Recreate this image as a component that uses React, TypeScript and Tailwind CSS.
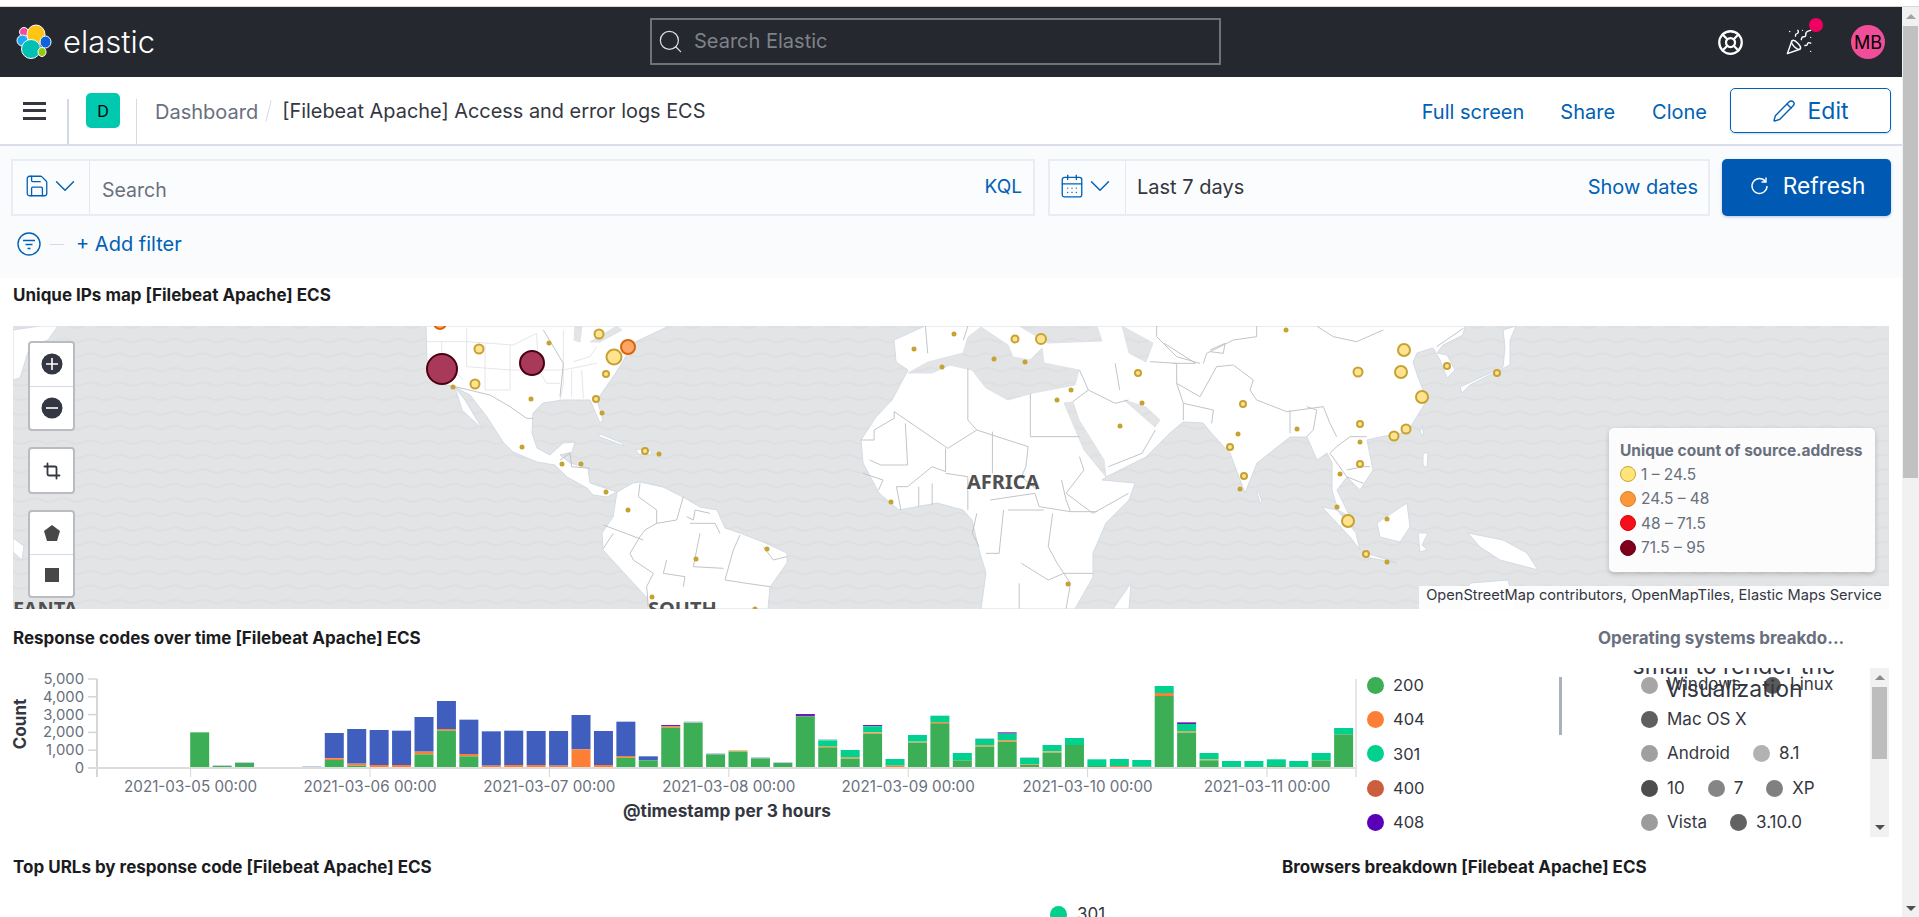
import { CalendarDays, ChevronDown, Crop, LifeBuoy, PartyPopper, Pencil, Save, Search } from 'lucide-react';

// polyline helper: zoom crops were read in crop pixels, so convert them to page pixels here
const at = (ox: number, k: number, pts: number[]) => {
  const out: string[] = [];
  for (let i = 0; i < pts.length; i += 2) out.push(`${ox + pts[i] / k},${320 + pts[i + 1] / 3}`);
  return out.join(' ');
};

const LAND = [
  // north + central america
  '426,326 427,360 440,383 455,387 470,395 487,417 503,442 513,452 537,462 555,465 567,477 587,488 593,495 607,497 617,492 590,483 588,468 570,463 560,455 572,452 575,442 563,443 550,455 537,448 532,433 533,413 543,403 563,400 590,400 600,423 603,420 597,400 613,377 622,363 633,343 667,327 667,326',
  // baja
  '455,387 465,400 483,430 478,425 462,410',
  // caribbean
  '598,433 622,443 624,446 600,437',
  '636,449 652,451 650,455 638,454',
  // south america
  '617,492 633,483 640,482 663,487 683,497 700,507 717,510 725,528 740,533 763,542 787,553 787,563 770,587 768,609 648,609 647,598 603,550 602,533 613,517',
  // eurasia + africa
  '894,340 925,326 1465,326 1463,335 1443,345 1437,353 1447,355 1455,370 1447,378 1440,360 1433,348 1417,353 1413,362 1418,377 1427,400 1413,423 1407,432 1380,437 1367,440 1373,470 1360,490 1347,477 1337,490 1350,517 1338,510 1332,490 1332,463 1327,453 1317,460 1307,437 1290,437 1257,463 1245,493 1230,453 1213,435 1203,423 1183,422 1170,433 1146,457 1106,477 1102,480 1135,483 1129,500 1106,523 1093,553 1093,577 1075,609 981,609 986,573 979,550 972,520 963,510 937,503 899,510 879,493 863,463 861,440 876,417 892,400 908,370 896,362',
  // japan, sri lanka, taiwan, philippines
  '1460,387 1503,367 1505,347 1503,330 1516,326 1510,340 1510,365 1470,385 1462,393',
  '1257,492 1260,503 1262,502 1259,492',
  '1422,425 1424,436 1420,432',
  '1423,453 1428,453 1427,468 1423,465',
  // indonesia, new guinea, australia, madagascar
  '1322,507 1350,537 1360,550 1356,533 1337,510',
  '1377,523 1407,503 1410,527 1400,542 1380,537',
  '1363,552 1397,563 1365,557',
  '1418,533 1428,533 1422,545 1427,550 1420,552',
  '1468,533 1503,540 1527,553 1538,570 1500,560 1480,547',
  '1460,609 1470,583 1508,580 1516,609',
  '1113,609 1131,583 1129,609',
  // far east wrap at the left edge, new zealand piece
  '13,330 40,326 58,326 48,340 30,346 20,378 13,380',
  '13,538 24,546 22,560 13,552',
];

const WATER = [
  '908,373 928,362 963,353 968,337 981,327 1008,345 1013,357 1030,360 1042,348 1044,363 1079,370 1075,385 1033,393 1008,400 986,388 972,370 950,365 932,373',
  '1019,326 1048,343 1102,341 1097,326',
  '1122,326 1153,343 1146,362 1129,353',
  '1064,403 1084,450 1106,477 1104,460 1079,420 1073,402',
  '1124,400 1155,427 1160,420 1146,407',
  '575,326 582,326 580,342 574,340',
  '590,342 617,326 622,330 600,342',
];

const BORDERS = [
  at(400, 3, [165, 200, 270, 225, 330, 260, 380, 295, 400, 295]),
  at(400, 3, [430, 30, 490, 130, 480, 230]),
  at(400, 3, [480, 420, 510, 400, 515, 440, 570, 445]),
  at(400, 3, [720, 490, 715, 530, 770, 570, 770, 610, 830, 600, 850, 530]),
  at(400, 3, [770, 610, 735, 630, 720, 650, 690, 700, 700, 720, 760, 760, 740, 800, 745, 860]),
  at(400, 3, [610, 615, 730, 660]),
  at(400, 3, [610, 685, 640, 640]),
  at(400, 3, [860, 590, 880, 600, 885, 570, 930, 580]),
  at(400, 3, [870, 610, 945, 610, 960, 640]),
  at(400, 3, [1020, 645, 1000, 690, 975, 780, 1040, 790, 1110, 800]),
  at(400, 3, [800, 720, 790, 760, 855, 770, 850, 800]),
  at(400, 3, [900, 640, 890, 690, 880, 740, 970, 745]),
  at(400, 3, [1090, 680, 1120, 720, 1160, 710]),
  at(700, 2.24, [435, 275, 555, 385, 620, 330, 735, 380]),
  at(700, 2.24, [435, 275, 435, 295, 390, 330, 390, 360, 360, 360]),
  at(700, 2.24, [460, 310, 465, 435, 405, 435, 380, 420]),
  at(700, 2.24, [600, 145, 600, 300, 620, 330]),
  at(700, 2.24, [740, 220, 740, 350, 850, 350]),
  at(700, 2.24, [655, 335, 655, 460]),
  at(700, 2.24, [735, 380, 730, 440, 720, 470, 755, 510]),
  at(700, 2.24, [550, 385, 550, 455, 520, 440, 465, 500, 440, 500, 450, 570]),
  at(700, 2.24, [365, 460, 410, 480, 400, 510]),
  at(700, 2.24, [490, 500, 490, 560]),
  at(700, 2.24, [520, 490, 520, 555]),
  at(700, 2.24, [550, 460, 600, 470, 600, 570]),
  at(700, 2.24, [850, 410, 860, 450, 820, 520, 880, 580, 960, 520]),
  at(700, 2.24, [810, 480, 820, 540, 830, 575, 890, 575]),
  at(700, 2.24, [650, 540, 750, 520, 760, 560, 830, 575]),
  at(700, 2.24, [690, 570, 770, 570]),
  at(700, 2.24, [680, 570, 670, 700, 640, 700]),
  at(700, 2.24, [790, 580, 780, 680, 800, 730, 830, 790, 820, 866]),
  at(700, 2.24, [720, 730, 780, 780, 815, 760, 880, 760]),
  at(700, 2.24, [715, 790, 715, 866]),
  at(700, 2.24, [620, 580, 610, 640, 625, 680]),
  at(700, 2.24, [850, 150, 870, 210, 835, 245]),
  at(700, 2.24, [870, 210, 930, 250, 960, 240]),
  at(700, 2.24, [930, 130, 940, 210]),
  at(700, 2.24, [915, 440, 990, 400, 1020, 330]),
  at(700, 2.24, [505, 18, 510, 100]),
  at(700, 2.24, [600, 18, 590, 60]),
  at(700, 2.24, [1040, 70, 1110, 130, 1060, 130]),
  at(1150, 3, [20, 18, 20, 50, 80, 110, 150, 130]),
  at(1150, 3, [0, 125, 80, 130, 80, 190, 100, 250, 100, 300]),
  at(1150, 3, [80, 190, 150, 230, 200, 140, 250, 135, 310, 180, 300, 210, 320, 240, 410, 275, 520, 260, 540, 310, 560, 350]),
  at(1150, 3, [100, 250, 190, 270, 185, 310]),
  at(1150, 3, [420, 270, 420, 340]),
  at(1150, 3, [470, 260, 500, 270, 490, 330, 470, 350]),
  at(1150, 3, [560, 380, 600, 350, 650, 350]),
  at(1150, 3, [560, 380, 540, 400, 590, 470, 640, 490]),
  at(1150, 3, [590, 450, 640, 440, 660, 440]),
  at(1150, 3, [500, 18, 550, 50, 620, 65, 700, 30]),
  at(1150, 3, [320, 18, 320, 50, 250, 60, 170, 100, 160, 130]),
  at(1150, 3, [180, 90, 225, 70, 220, 100, 180, 95]),
  at(1150, 3, [940, 25, 860, 80]),
];

// faint state lines over the US
const STATES = [
  at(400, 3, [80, 65, 200, 65, 340, 75, 410, 40]),
  at(400, 3, [125, 65, 125, 110, 190, 180]),
  at(400, 3, [200, 25, 200, 140, 330, 150, 490, 150, 590, 130]),
  at(400, 3, [255, 75, 255, 210, 330, 210, 330, 75]),
  at(400, 3, [410, 40, 415, 150, 440, 190, 480, 190]),
  at(400, 3, [490, 30, 490, 190, 480, 240]),
  at(400, 3, [515, 150, 515, 230]),
  at(400, 3, [545, 150, 550, 235]),
  at(400, 3, [520, 125, 570, 110, 590, 80]),
];

type Bubble = [number, number, number, 'd' | 'o' | 'y'];
const BUBBLES: Bubble[] = [
  [440, 323, 6, 'o'], [479, 349, 4.5, 'y'], [475, 384, 4.5, 'y'], [599, 334, 4.5, 'y'], [614, 357, 7.5, 'y'], [606, 374, 3, 'y'],
  [596, 399, 3, 'y'], [645, 451, 3, 'y'], [1015, 339, 3.5, 'y'], [1041, 339, 5, 'y'], [1138, 373, 3, 'y'], [1404, 350, 6, 'y'],
  [1358, 372, 4.5, 'y'], [1401, 372, 6, 'y'], [1447, 366, 3, 'y'], [1497, 373, 3, 'y'], [1422, 397, 6, 'y'], [1243, 404, 3, 'y'],
  [1360, 424, 3, 'y'], [1406, 429, 4.5, 'y'], [1394, 436, 4.5, 'y'], [1230, 447, 3, 'y'], [1360, 464, 3, 'y'], [1244, 476, 3, 'y'],
  [1348, 521, 6, 'y'], [1366, 554, 3, 'y'], [628, 347, 7, 'o'], [442, 369, 15, 'd'], [532, 363, 12, 'd'],
];
const DOTS = [
  [453, 387], [549, 343], [602, 413], [531, 399], [522, 447], [562, 464], [581, 464], [659, 454], [606, 492], [628, 510], [767, 549],
  [696, 559], [652, 597], [755, 609], [954, 334], [914, 349], [994, 359], [1025, 362], [942, 367], [1071, 390], [1057, 400], [1142, 403],
  [1120, 426], [891, 502], [1068, 584], [1286, 330], [1297, 429], [1238, 434], [1360, 442], [1340, 474], [1240, 489], [1337, 507],
  [1387, 519], [1387, 562],
];

const BUBBLE_STYLE = {
  d: { fill: '#a9395a', stroke: '#4a0010' },
  o: { fill: '#ffa566', stroke: '#d9650b' },
  y: { fill: '#ffe38f', stroke: '#c5a233' },
};

const COLORS: Record<string, string> = {
  g: '#3cae56', b: '#3f5ebe', o: '#fd7f36', t: '#00d18f', p: '#6a1bb8', l: '#c3d0e6', y: '#d9a960',
};

// each bar: colour + top edge in crop pixels, from the top segment down; the bar ends at 444
const BARS: [number, [string, number][]][] = [
  [0, [['g', 340]]], [1, [['l', 438], ['g', 441]]], [2, [['l', 429], ['g', 432]]],
  [5, [['l', 441]]],
  [6, [['b', 342], ['o', 418], ['g', 423]]], [7, [['b', 330], ['o', 434], ['g', 440]]], [8, [['b', 333], ['o', 438]]],
  [9, [['b', 335], ['o', 438]]], [10, [['b', 294], ['o', 398], ['g', 406]]], [11, [['b', 246], ['o', 330], ['g', 335]]],
  [12, [['b', 302], ['o', 405], ['g', 412]]], [13, [['b', 337], ['o', 440]]], [14, [['b', 335], ['o', 438]]],
  [15, [['b', 336], ['o', 438]]], [16, [['b', 336], ['o', 440]]], [17, [['b', 288], ['o', 391]]],
  [18, [['b', 336], ['o', 438]]], [19, [['b', 308], ['o', 411], ['g', 416]]], [20, [['b', 412], ['g', 424]]],
  [21, [['p', 318], ['o', 322], ['g', 326]]], [22, [['l', 307], ['g', 311]]], [23, [['l', 402], ['g', 406]]],
  [24, [['y', 394], ['g', 398]]], [25, [['l', 414], ['g', 418]]], [26, [['l', 429], ['g', 432]]],
  [27, [['p', 285], ['g', 292]]], [28, [['l', 360], ['t', 364], ['y', 381], ['g', 385]]], [29, [['t', 393], ['y', 414], ['g', 419]]],
  [30, [['p', 318], ['t', 322], ['y', 340], ['g', 345]]], [31, [['t', 420], ['o', 440]]], [32, [['t', 348], ['y', 368], ['g', 371]]],
  [33, [['t', 290], ['o', 311], ['g', 315]]], [34, [['t', 402], ['g', 424]]], [35, [['l', 357], ['t', 360], ['y', 378], ['g', 383]]],
  [36, [['p', 340], ['t', 344], ['y', 363], ['g', 369]]], [37, [['l', 414], ['t', 417], ['y', 435], ['g', 438]]],
  [38, [['t', 378], ['y', 397], ['g', 401]]], [39, [['t', 357], ['g', 378]]], [40, [['t', 421], ['g', 441]]],
  [41, [['t', 420], ['o', 441]]], [42, [['t', 423], ['g', 442]]], [43, [['t', 201], ['o', 222], ['g', 231]]],
  [44, [['p', 310], ['t', 315], ['y', 336], ['g', 341]]], [45, [['t', 402], ['y', 421], ['g', 424]]], [46, [['t', 426]]],
  [47, [['t', 426]]], [48, [['t', 421], ['g', 441]]], [49, [['t', 426]]], [50, [['t', 402], ['g', 424]]], [51, [['t', 327], ['g', 346]]],
];

const TICKS = ['2021-03-05 00:00', '2021-03-06 00:00', '2021-03-07 00:00', '2021-03-08 00:00', '2021-03-09 00:00', '2021-03-10 00:00', '2021-03-11 00:00'];

const RESPONSE_LEGEND = [
  ['200', 'bg-[#3cae56]'],
  ['404', 'bg-[#fd7f36]'],
  ['301', 'bg-[#00d18f]'],
  ['400', 'bg-[#cb5f3d]'],
  ['408', 'bg-[#5a00b8]'],
];

const OS_LEGEND = [
  [['Windows', 'bg-[#a6a6a6]'], ['Linux', 'bg-[#5a5a5a]']],
  [['Mac OS X', 'bg-[#5f5f5f]']],
  [['Android', 'bg-[#a0a0a0]'], ['8.1', 'bg-[#b2b2b2]']],
  [['10', 'bg-[#4d4d4d]'], ['7', 'bg-[#858585]'], ['XP', 'bg-[#808080]']],
  [['Vista', 'bg-[#9c9c9c]'], ['3.10.0', 'bg-[#626262]']],
];

function Logo() {
  return (
    <svg width="36" height="36" viewBox="0 0 36 36">
      <circle cx="8" cy="8" r="4.5" fill="#f04e98" stroke="#fff" />
      <ellipse cx="20" cy="10.5" rx="9" ry="9.5" fill="#fec514" stroke="#fff" />
      <ellipse cx="6.5" cy="16.5" rx="5.5" ry="5.5" fill="#1ba9f5" stroke="#fff" />
      <ellipse cx="29.5" cy="18" rx="5.5" ry="6" fill="#0b64dd" stroke="#fff" />
      <ellipse cx="15" cy="25" rx="9.5" ry="9.5" fill="#00bfb3" stroke="#fff" />
      <ellipse cx="26" cy="28" rx="4" ry="4.5" fill="#93c90e" stroke="#fff" />
    </svg>
  );
}

function MapPanel() {
  return (
    <div className="relative h-[283px] overflow-hidden bg-[#e3e4e6]">
      <svg className="block h-full w-full" viewBox="13 326 1876 283" preserveAspectRatio="none">
        <defs>
          <pattern id="waves" width="28" height="14.5" patternUnits="userSpaceOnUse">
            <rect width="28" height="14.5" fill="#e3e4e6" />
            <path d="M0 7 Q7 3.5 14 7 T28 7" fill="none" stroke="#dddee0" strokeWidth="1.5" />
          </pattern>
        </defs>
        <rect x="13" y="326" width="1876" height="283" fill="url(#waves)" />
        {LAND.map((p, i) => (
          <polygon key={i} points={p} fill="#fff" stroke="#d3dbe6" strokeWidth="1" />
        ))}
        {WATER.map((p, i) => (
          <polygon key={i} points={p} fill="url(#waves)" stroke="#e0e3e8" strokeWidth="1" />
        ))}
        {STATES.map((p, i) => (
          <polyline key={i} points={p} fill="none" stroke="#e4e6e8" strokeWidth="1" />
        ))}
        {BORDERS.map((p, i) => (
          <polyline key={i} points={p} fill="none" stroke="#c2c4c7" strokeWidth="1" />
        ))}
        <text x="967" y="489" fontSize="20" fontWeight="700" fill="#4f5052" fontFamily="'Noto Sans', sans-serif">AFRICA</text>
        <text x="648" y="616" fontSize="20" fontWeight="700" fill="#4f5052" fontFamily="'Noto Sans', sans-serif">SOUTH</text>
        <text x="13" y="616" fontSize="20" fontWeight="700" fill="#4f5052" fontFamily="'Noto Sans', sans-serif">FANTA</text>
        {DOTS.map(([x, y], i) => (
          <circle key={i} cx={x} cy={y} r="2.5" fill="#c5a231" />
        ))}
        {BUBBLES.map(([x, y, r, k], i) => (
          <circle key={i} cx={x} cy={y} r={r} fill={BUBBLE_STYLE[k].fill} stroke={BUBBLE_STYLE[k].stroke} strokeWidth="2" />
        ))}
      </svg>

      <div className="absolute left-[15px] top-[15px] flex flex-col">
        <div className="flex h-[90px] w-[47px] flex-col rounded-[4px] border-2 border-[#b9bcc1] bg-white">
          <div className="flex flex-1 items-center justify-center border-b border-[#d3dae6]">
            <svg width="22" height="22" viewBox="0 0 22 22">
              <circle cx="11" cy="11" r="10.5" fill="#343741" />
              <path d="M11 5v12M5 11h12" stroke="#fff" strokeWidth="1.6" />
            </svg>
          </div>
          <div className="flex flex-1 items-center justify-center">
            <svg width="22" height="22" viewBox="0 0 22 22">
              <circle cx="11" cy="11" r="10.5" fill="#343741" />
              <path d="M5 11h12" stroke="#fff" strokeWidth="1.6" />
            </svg>
          </div>
        </div>
        <div className="mt-[16px] flex h-[47px] w-[47px] items-center justify-center rounded-[4px] border-2 border-[#b9bcc1] bg-white">
          <Crop size={18} strokeWidth={2.4} className="text-[#343741]" />
        </div>
        <div className="mt-[16px] flex h-[88px] w-[47px] flex-col rounded-[4px] border-2 border-[#b9bcc1] bg-white">
          <div className="flex flex-1 items-center justify-center border-b border-[#d3dae6]">
            <svg width="18" height="18" viewBox="0 0 18 18">
              <polygon points="9,1 17,7 14,17 4,17 1,7" fill="#474747" />
            </svg>
          </div>
          <div className="flex flex-1 items-center justify-center">
            <div className="h-[14px] w-[14px] bg-[#474747]" />
          </div>
        </div>
      </div>

      <div className="absolute left-[1596px] top-[102px] h-[144px] w-[266px] rounded-[5px] bg-white/90 px-[11px] pt-[12px] shadow-[0_2px_5px_rgba(0,0,0,0.2)]">
        <div className="whitespace-nowrap text-[15.5px] font-bold leading-[22px] text-[#69707d]">Unique count of source.address</div>
        {[
          ['1 – 24.5', 'bg-[#ffe47a]', 'border-[#c8a72e]'],
          ['24.5 – 48', 'bg-[#fc983a]', 'border-[#d97f25]'],
          ['48 – 71.5', 'bg-[#f40f1a]', 'border-[#e00000]'],
          ['71.5 – 95', 'bg-[#80001c]', 'border-[#60001a]'],
        ].map(([label, bg, border]) => (
          <div key={label} className="flex h-[24.6px] items-center gap-[5px] text-[15.5px] text-[#69707d]">
            <span className={`h-[16px] w-[16px] rounded-full border ${bg} ${border}`} />
            {label}
          </div>
        ))}
      </div>

      <div className="absolute bottom-0 right-0 flex h-[23px] w-[470px] items-center justify-center bg-white/90 pb-[3px] text-[14.6px] text-[#343741]">
        OpenStreetMap contributors, OpenMapTiles, Elastic Maps Service
      </div>
    </div>
  );
}

function ResponseChart() {
  return (
    <svg className="block h-[161px] w-[1360px] shrink-0" viewBox="0 669 1360 161" fontFamily="Inter, sans-serif">
      {['5,000', '4,000', '3,000', '2,000', '1,000', '0'].map((label, i) => {
        const y = 680 + i * 17.8;
        return (
          <g key={label}>
            <line x1="88" x2="97" y1={y} y2={y} stroke="#d6d6d6" strokeWidth="1.5" />
            <text x="84" y={y + 5} fontSize="14.8" fill="#69707d" textAnchor="end">{label}</text>
          </g>
        );
      })}
      <text transform="translate(26 725) rotate(-90)" fontSize="17" fontWeight="700" fill="#343741" textAnchor="middle">Count</text>
      {BARS.map(([i, segs]) =>
        segs.map(([c, top], j) => {
          const bottom = j + 1 < segs.length ? segs[j + 1][1] : 444;
          return (
            <rect key={`${i}-${j}`} x={190.2 + 22.43 * i} y={620 + top / 3} width="19" height={(bottom - top) / 3} fill={COLORS[c]} />
          );
        })
      )}
      <line x1="97" x2="97" y1="680" y2="778" stroke="#d6d6d6" strokeWidth="2" />
      <line x1="88" x2="1356" y1="769" y2="769" stroke="#dcdcdc" strokeWidth="2" />
      <line x1="1356" x2="1356" y1="680" y2="778" stroke="#e6e6e6" strokeWidth="2" />
      {TICKS.map((label, i) => {
        const x = 190.6 + 179.4 * i;
        return (
          <g key={label}>
            <line x1={x} x2={x} y1="769" y2="778" stroke="#d6d6d6" strokeWidth="1" />
            <text x={x} y="793" fontSize="15.2" fill="#69707d" textAnchor="middle">{label}</text>
          </g>
        );
      })}
      <text x="727" y="818" fontSize="17.3" fontWeight="700" fill="#343741" textAnchor="middle">@timestamp per 3 hours</text>
    </svg>
  );
}

function OsPanel() {
  return (
    <div className="relative flex h-[169px] overflow-hidden">
      <div className="flex-1 pl-[43px]">
        {OS_LEGEND.map((row, i) => (
          <div key={i} className="flex h-[34.4px] items-center gap-[23px]">
            {row.map(([label, bg]) => (
              <div key={label} className="flex items-center gap-[9px] text-[17px] text-[#343741]">
                <span className={`h-[17px] w-[17px] rounded-full ${bg}`} />
                {label}
              </div>
            ))}
          </div>
        ))}
      </div>
      <div className="absolute left-0 right-[19px] top-[-13px] text-center text-[23px] leading-[23px] text-[#343741]">
        small to render the
        <br />
        Visualization
      </div>
      <div className="flex h-[169px] w-[19px] flex-col items-center bg-[#f1f1f1]">
        <span className="mt-[7px] h-0 w-0 border-x-[5px] border-b-[5px] border-x-transparent border-b-[#8b8b8b]" />
        <div className="mt-[7px] h-[72px] w-[15px] bg-[#bdbdbd]" />
        <span className="mt-auto mb-[7px] h-0 w-0 border-x-[5px] border-t-[5px] border-x-transparent border-t-[#505050]" />
      </div>
    </div>
  );
}

export default function App() {
  return (
    <div className="h-[917px] w-[1919px] overflow-hidden bg-white font-['Inter',sans-serif]">
      <div className="h-[7px] border-b border-[#d8d8d8] bg-white" />
      <div className="flex h-[910px]">
        <main className="w-[1902px] shrink-0 overflow-hidden">
          <header className="relative flex h-[70px] items-center justify-between bg-[#25282f] pl-[16px] pr-[16px]">
            <div className="flex items-center gap-[11px]">
              <Logo />
              <span className="pb-[2px] text-[31px] font-light leading-none text-white">elastic</span>
            </div>
            <div className="absolute left-[650px] top-[11px] flex h-[47px] w-[571px] items-center gap-[10px] border-2 border-[#6f7278] pl-[5px]">
              <Search size={27} strokeWidth={1.1} className="text-[#dfe0e2]" />
              <span className="pb-[1px] text-[20px] text-[#7e8289]">Search Elastic</span>
            </div>
            <div className="flex items-center">
              <LifeBuoy size={27} strokeWidth={2} className="text-white" />
              <div className="relative ml-[41px]">
                <PartyPopper size={28} strokeWidth={1.2} className="text-white" />
                <span className="absolute left-[24px] top-[-10px] h-[14px] w-[14px] rounded-full bg-[#f0005f]" />
              </div>
              <div className="ml-[38px] mr-[1px] flex h-[34px] w-[34px] items-center justify-center rounded-full bg-[#f04e98] text-[18px] text-black">MB</div>
            </div>
          </header>

          <nav className="flex h-[69px] items-center justify-between border-b-2 border-[#d9deea] bg-white pr-[11px] shadow-[0_1px_3px_rgba(152,162,179,0.25)]">
            <div className="flex h-full items-center">
              <div className="ml-[23px] flex h-[18px] w-[23px] flex-col justify-between">
                <span className="h-[3px] bg-[#343741]" />
                <span className="h-[3px] bg-[#343741]" />
                <span className="h-[3px] bg-[#343741]" />
              </div>
              <div className="ml-[21px] mt-[23px] h-[46px] w-[2px] bg-[#d3dae6]" />
              <div className="ml-[17px] flex h-[35px] w-[34px] items-center justify-center rounded-[5px] bg-[#00c9b0] text-[16px] text-black">D</div>
              <div className="ml-[16px] mt-[23px] h-[46px] w-[1px] bg-[#d3dae6]" />
              <span className="ml-[18px] mt-[2px] text-[20px] text-[#69707d]">Dashboard</span>
              <span className="ml-[10px] h-[22px] w-[1px] rotate-[14deg] bg-[#d3dae6]" />
              <span className="ml-[13px] mt-[2px] text-[19.9px] text-[#343741]">[Filebeat Apache] Access and error logs ECS</span>
            </div>
            <div className="flex items-center text-[20px] text-[#0061b5]">
              <span className="mt-[2px]">Full screen</span>
              <span className="ml-[36px] mt-[2px]">Share</span>
              <span className="ml-[37px] mt-[2px]">Clone</span>
              <div className="ml-[23px] flex h-[45px] w-[161px] items-center justify-center gap-[11px] rounded-[5px] border border-[#0061b5] pt-[1px] text-[23px] shadow-[0_1px_2px_rgba(0,97,181,0.25)]">
                <Pencil size={24} strokeWidth={1.4} />
                Edit
              </div>
            </div>
          </nav>

          <section className="h-[132px] bg-[#fafbfd] pl-[11px] pr-[11px] pt-[13px]">
            <div className="flex h-[57px] items-stretch">
              <div className="flex w-[1024px] border-2 border-[#e9edf3] bg-[#fbfcfd]">
                <div className="flex w-[77px] items-center border-r border-[#e4e8f1] pb-[4px] pl-[11px] text-[#0061b5]">
                  <Save size={26} strokeWidth={1.2} />
                  <ChevronDown size={34} strokeWidth={1} className="-ml-[2px]" />
                </div>
                <span className="ml-[12px] self-center pt-[6px] text-[19.5px] text-[#69707d]">Search</span>
                <span className="ml-auto mr-[11px] self-center pb-[1px] text-[19px] text-[#0061b5]">KQL</span>
              </div>
              <div className="ml-[13px] flex w-[662px] border-2 border-[#e9edf3] bg-[#fbfcfd]">
                <div className="flex w-[76px] items-center border-r border-[#e4e8f1] pb-[4px] pl-[9px] text-[#0061b5]">
                  <CalendarDays size={26} strokeWidth={1.2} />
                  <ChevronDown size={34} strokeWidth={1} className="-ml-[2px]" />
                </div>
                <span className="ml-[11px] self-center pb-[2px] text-[20px] text-[#343741]">Last 7 days</span>
                <span className="ml-auto mr-[10px] self-center pb-[2px] text-[20px] text-[#0061b5]">Show dates</span>
              </div>
              <div className="ml-[12px] flex w-[169px] items-center justify-center gap-[13px] rounded-[5px] bg-[#0059b3] pb-[3px] pl-[2px] text-[22.7px] text-white shadow-[0_1px_3px_rgba(0,89,179,0.3)]">
                <svg width="20" height="20" viewBox="0 0 20 20" fill="none" stroke="#fff" strokeWidth="1.4">
                  <path d="M15.5 5.5A7.5 7.5 0 1 0 17 10" />
                  <path d="M16 1.5v4.5h-4.5" />
                </svg>
                Refresh
              </div>
            </div>
            <div className="mt-[12px] flex h-[32px] items-center pl-[6px] text-[#0061b5]">
              <svg width="24" height="24" viewBox="0 0 24 24" fill="none" stroke="#0061b5" strokeWidth="1.4">
                <circle cx="12" cy="12" r="11" />
                <path d="M6 8.5h12M8.5 12.5h7M10.5 16.5h3" />
              </svg>
              <span className="ml-[9px] h-[1px] w-[14px] bg-[#d3dae6]" />
              <span className="ml-[12px] text-[20px]">+ Add filter</span>
            </div>
          </section>

          <div className="px-[13px]">
            <h3 className="flex h-[48px] items-center pb-[12px] text-[17px] font-bold text-[#1a1c21]">Unique IPs map [Filebeat Apache] ECS</h3>
            <MapPanel />
          </div>

          <div className="flex h-[241px]">
            <div className="relative w-[1598px] shrink-0">
              <h3 className="flex h-[59px] items-center pl-[13px] text-[17px] font-bold text-[#1a1c21]">Response codes over time [Filebeat Apache] ECS</h3>
              <div className="flex">
                <ResponseChart />
                <div className="ml-[7px] w-[192px]">
                  {RESPONSE_LEGEND.map(([label, bg]) => (
                    <div key={label} className="flex h-[34.4px] items-center gap-[9px] text-[16.5px] text-[#343741]">
                      <span className={`h-[17px] w-[17px] rounded-full ${bg}`} />
                      {label}
                    </div>
                  ))}
                </div>
                <div className="mt-[9px] h-[58px] w-[3px] bg-[#aab1ba]" />
              </div>
            </div>
            <div className="w-[291px] shrink-0">
              <h3 className="flex h-[59px] items-center whitespace-nowrap text-[17px] font-bold text-[#69707d]">Operating systems breakdo...</h3>
              <OsPanel />
            </div>
          </div>

          <div className="flex h-[36px] items-center pl-[13px] text-[17px] font-bold text-[#1a1c21]">
            <h3 className="w-[1269px]">Top URLs by response code [Filebeat Apache] ECS</h3>
            <h3>Browsers breakdown [Filebeat Apache] ECS</h3>
          </div>
          <div className="ml-[1050px] mt-[16px] flex items-center gap-[10px] text-[17px] text-[#343741]">
            <span className="h-[17px] w-[17px] rounded-full bg-[#00d18f]" />
            301
          </div>
        </main>

        <aside className="flex h-[910px] w-[17px] shrink-0 flex-col items-center bg-[#f1f1f1]">
          <span className="mt-[7px] h-0 w-0 border-x-[5px] border-b-[5px] border-x-transparent border-b-[#a3a3a3]" />
          <div className="mt-[7px] h-[452px] w-[15px] bg-[#c1c1c1]" />
          <span className="mt-auto mb-[6px] h-0 w-0 border-x-[5px] border-t-[5px] border-x-transparent border-t-[#505050]" />
        </aside>
      </div>
    </div>
  );
}
